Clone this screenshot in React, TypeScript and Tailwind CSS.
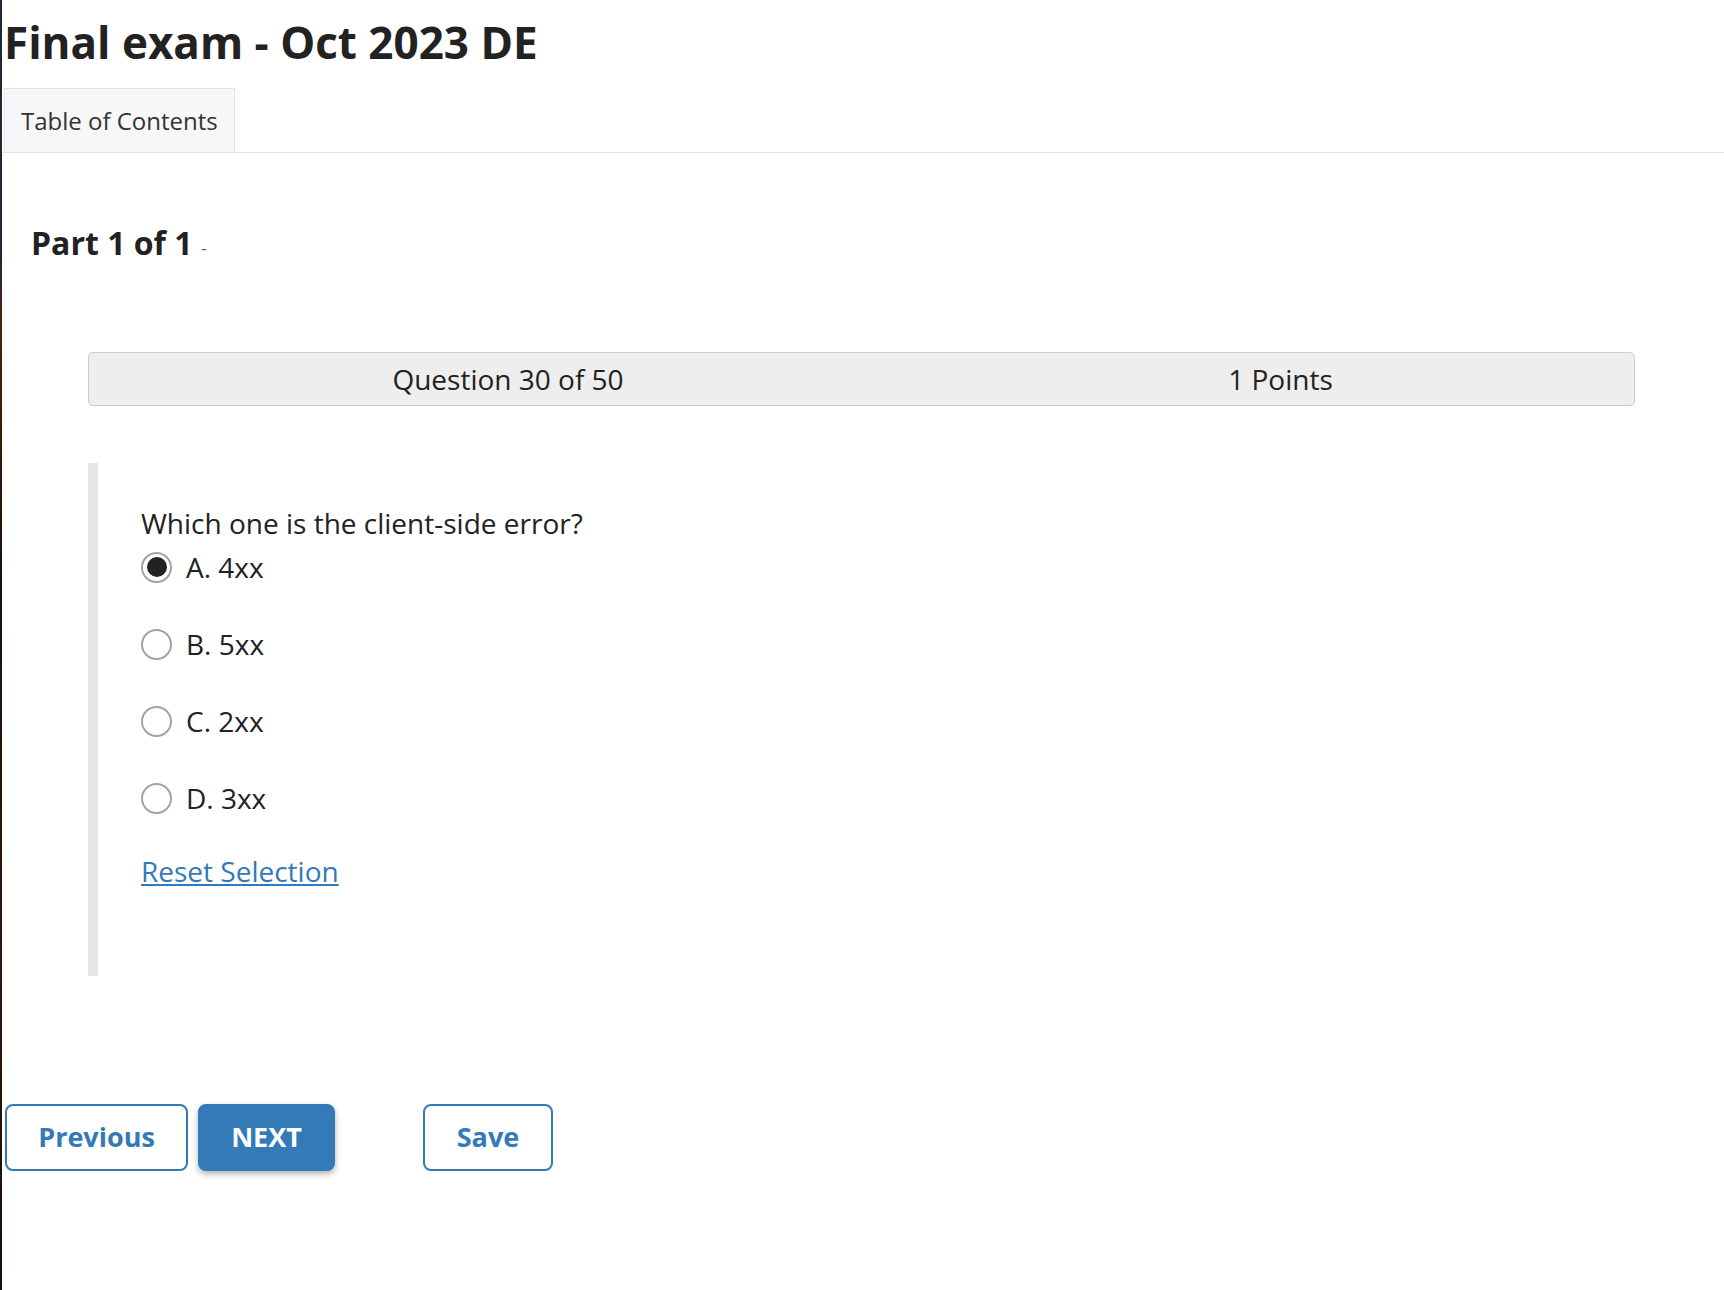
import React from "react";

const options = [
  { label: "A. 4xx", checked: true },
  { label: "B. 5xx", checked: false },
  { label: "C. 2xx", checked: false },
  { label: "D. 3xx", checked: false },
];

const Radio = ({ checked }: { checked: boolean }) => (
  <div className="w-[31px] h-[31px] rounded-full border-2 border-[#a3a3a3] bg-white flex items-center justify-center shrink-0">
    {checked && <div className="w-[20px] h-[20px] rounded-full bg-[#222]" />}
  </div>
);

const App = () => {
  return (
    <div className="flex min-h-[1290px] bg-white font-['Open_Sans',sans-serif] text-[#222]">
      {/* dark window edge on the left */}
      <div className="w-[2px] shrink-0 bg-[linear-gradient(to_bottom,#1c2838_0%,#1c2838_20%,#4a2412_24%,#1b0f08_45%,#2e170b_75%,#1a0d06_100%)]" />

      <div className="flex-1">
        <h1 className="pl-[2px] pt-[14px] text-[44px] leading-[56px] font-bold text-[#222]">
          Final exam - Oct 2023 DE
        </h1>

        <div className="mt-[18px] flex border-b border-[#e3e3e3]">
          <div className="ml-[2px] h-[64px] px-[16px] flex items-center border border-b-0 border-[#e3e3e3] bg-[#f7f7f7] text-[24px] text-[#333]">
            Table of Contents
          </div>
        </div>

        <div className="pl-[29px] mt-[70px]">
          <h2 className="text-[32px] leading-[40px] font-bold text-[#222]">
            Part 1 of 1{" "}
            <span className="text-[18px] font-normal text-[#666]">-</span>
          </h2>
        </div>

        <div className="ml-[86px] mr-[89px] mt-[84px]">
          <div className="h-[54px] grid grid-cols-[838px_1fr] items-center text-center text-[28px] text-[#222] bg-[#eeeeee] border border-[#cccccc] rounded-[5px]">
            <div>Question 30 of 50</div>
            <div>1 Points</div>
          </div>

          <div className="mt-[57px] border-l-[10px] border-[#e6e6e6] pl-[43px] pt-[41px] pb-[86px]">
            <p className="text-[28px] leading-[38px] text-[#222]">
              Which one is the client-side error?
            </p>
            <div className="mt-[6px] flex flex-col gap-[39px]">
              {options.map((opt, i) => (
                <label key={i} className="h-[38px] flex items-center">
                  <Radio checked={opt.checked} />
                  <span className="ml-[14px] text-[28px] text-[#222]">{opt.label}</span>
                </label>
              ))}
            </div>
            <div className="mt-[35px]">
              <a href="#" className="text-[28px] leading-[38px] text-[#337ab7] underline">
                Reset Selection
              </a>
            </div>
          </div>
        </div>

        <div className="mt-[128px] pl-[3px] flex items-center">
          <button className="w-[183px] h-[67px] rounded-[8px] border-2 border-[#337ab7] bg-white text-[#337ab7] text-[27px] font-bold">
            Previous
          </button>
          <button className="ml-[10px] w-[137px] h-[67px] rounded-[8px] border-2 border-[#337ab7] bg-[#337ab7] text-white text-[27px] font-bold shadow-[0_3px_6px_rgba(0,0,0,0.3)]">
            NEXT
          </button>
          <button className="ml-[88px] w-[130px] h-[67px] rounded-[8px] border-2 border-[#337ab7] bg-white text-[#337ab7] text-[27px] font-bold">
            Save
          </button>
        </div>
      </div>
    </div>
  );
};

export default App;
